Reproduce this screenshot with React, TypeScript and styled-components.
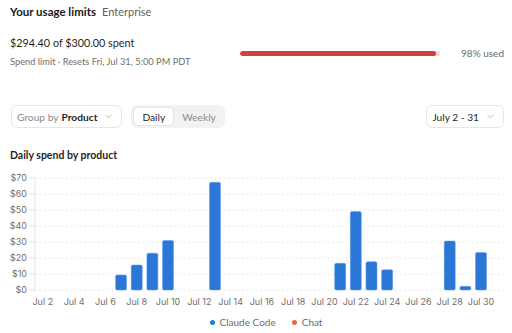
import React from 'react';
import styled, {createGlobalStyle} from 'styled-components';
import {ChevronDown} from 'lucide-react';

const GlobalStyle = createGlobalStyle`
    body {
        margin: 0;
        background: #ffffff;
        font-family: Lato, "Noto Sans", sans-serif;
        color: #1f1f1f;
    }
`;

const Page = styled.div`
    box-sizing: border-box;
    width: 512px;
    height: 333px;
    overflow: hidden;
    display: flex;
    flex-direction: column;
`;

const Header = styled.div`
    display: flex;
    align-items: baseline;
    gap: 6px;
    padding: 5px 10px 0;
`;

const Title = styled.h1`
    margin: 0;
    font-size: 11.5px;
    font-weight: 700;
    color: #1a1a1a;
`;

const Plan = styled.span`
    font-size: 11px;
    color: #5f5f5f;
`;

const Summary = styled.div`
    display: flex;
    align-items: center;
    justify-content: space-between;
    padding: 18px 8px 0 10px;
`;

const SummaryText = styled.div`
    display: flex;
    flex-direction: column;
    gap: 7px;
`;

const Spent = styled.div`
    font-size: 10.8px;
    color: #1f1f1f;
`;

const Resets = styled.div`
    font-size: 9.3px;
    color: #707070;
`;

const UsageRow = styled.div`
    display: flex;
    align-items: center;
    gap: 21px;
    margin-top: 3px;
`;

const Track = styled.div`
    width: 200px;
    height: 5px;
    border-radius: 3px;
    background: #f6d9d9;
    overflow: hidden;
`;

const Fill = styled.div`
    height: 100%;
    border-radius: 3px;
    background: #d23f40;
`;

const UsedLabel = styled.span`
    font-size: 10px;
    color: #6b6b6b;
`;

const Controls = styled.div`
    display: flex;
    align-items: center;
    gap: 9px;
    padding: 38px 8px 0 11px;
`;

const Select = styled.button`
    box-sizing: border-box;
    height: 23px;
    display: flex;
    align-items: center;
    gap: 3px;
    padding: 0 7px 0 5px;
    background: #fff;
    border: 1px solid #e6e6e6;
    border-radius: 6px;
    font-family: inherit;
    font-size: 10.2px;
    color: #1f1f1f;

    svg {
        color: #9a9a9a;
        margin-left: 3px;
    }
`;

const Muted = styled.span`
    color: #8a8a8a;
`;

const Strong = styled.span`
    font-weight: 700;
`;

const Segmented = styled.div`
    box-sizing: border-box;
    height: 23px;
    display: flex;
    align-items: center;
    gap: 1px;
    padding: 2px;
    background: #f2f2f2;
    border-radius: 6px;
`;

const Segment = styled.button<{$active?: boolean}>`
    box-sizing: border-box;
    height: 19px;
    padding: 0 ${({$active}) => ($active ? '8px' : '6px')};
    border: 1px solid ${({$active}) => ($active ? '#e4e4e4' : 'transparent')};
    border-radius: 5px;
    background: ${({$active}) => ($active ? '#ffffff' : 'transparent')};
    font-family: inherit;
    font-size: 10.2px;
    color: ${({$active}) => ($active ? '#1f1f1f' : '#8a8a8a')};
`;

const Spacer = styled.div`
    flex: 1;
`;

const ChartTitle = styled.h2`
    margin: 0;
    padding: 21px 10px 0;
    font-size: 10.5px;
    font-weight: 700;
    color: #1f1f1f;
`;

const ChartSvg = styled.svg`
    display: block;
    margin-top: 8px;
`;

const Legend = styled.div`
    display: flex;
    justify-content: center;
    gap: 16px;
    margin-top: 5px;
    padding-left: 20px;
`;

const LegendItem = styled.span<{$color: string}>`
    display: flex;
    align-items: center;
    gap: 5px;
    font-size: 10px;
    color: #6b6b6b;

    &::before {
        content: '';
        width: 5px;
        height: 5px;
        border-radius: 50%;
        background: ${({$color}) => $color};
    }
`;

// daily spend in dollars, Jul 2 .. Jul 31
const spend: Record<number, number> = {
    7: 9.4, 8: 15.6, 9: 23, 10: 31, 13: 67.3,
    21: 16.7, 22: 49, 23: 17.7, 24: 12.7,
    28: 30.6, 29: 2.3, 30: 23.5,
};

const X0 = 35;
const BAND = 15.65;
const ZERO = 121;
const PX_PER_DOLLAR = 1.6;

const SpendChart = () => {
    const days = Array.from({length: 30}, (_, i) => i + 2);
    const ticks = [0, 10, 20, 30, 40, 50, 60, 70];
    const centre = (day: number) => X0 + (day - 2 + 0.5) * BAND;

    return (
        <ChartSvg width={512} height={142} viewBox="0 0 512 142">
            {ticks.map(t => {
                const y = ZERO - t * PX_PER_DOLLAR;
                return (
                    <g key={t}>
                        <line x1={X0} x2={507} y1={y} y2={y} stroke="#e2e2e2" strokeWidth={1} strokeDasharray="1.5 3"/>
                        <line x1={29} x2={X0} y1={y} y2={y} stroke="#e2e2e2" strokeWidth={1}/>
                        <text x={27} y={y + 3.2} textAnchor="end" fontSize={9} fill="#707070" fontFamily="Inter, sans-serif">${t}</text>
                    </g>
                );
            })}
            <line x1={X0} x2={X0} y1={ZERO - 70 * PX_PER_DOLLAR} y2={ZERO} stroke="#e6e6e6" strokeWidth={1}/>
            {days.map(day => {
                const value = spend[day];
                if (!value) return null;
                const h = value * PX_PER_DOLLAR;
                return (
                    <rect key={day} x={centre(day) - 5.5} y={ZERO - h} width={11} height={h}
                          rx={1.5} fill="#2a77d8" stroke="#5c9ae6" strokeWidth={0.5}/>
                );
            })}
            {days.filter(d => d % 2 === 0).map(day => (
                <text key={day} x={centre(day)} y={136} textAnchor="middle" fontSize={9} fill="#707070" fontFamily="Inter, sans-serif">
                    Jul {day}
                </text>
            ))}
        </ChartSvg>
    );
};

export default function App() {
    return (
        <Page>
            <GlobalStyle/>
            <Header>
                <Title>Your usage limits</Title>
                <Plan>Enterprise</Plan>
            </Header>
            <Summary>
                <SummaryText>
                    <Spent>$294.40 of $300.00 spent</Spent>
                    <Resets>Spend limit · Resets Fri, Jul 31, 5:00 PM PDT</Resets>
                </SummaryText>
                <UsageRow>
                    <Track>
                        <Fill style={{width: `${(294.4 / 300) * 100}%`}}/>
                    </Track>
                    <UsedLabel>98% used</UsedLabel>
                </UsageRow>
            </Summary>
            <Controls>
                <Select>
                    <Muted>Group by</Muted>
                    <Strong>Product</Strong>
                    <ChevronDown size={11} strokeWidth={1.5}/>
                </Select>
                <Segmented>
                    <Segment $active>Daily</Segment>
                    <Segment>Weekly</Segment>
                </Segmented>
                <Spacer/>
                <Select>
                    <span>July 2 - 31</span>
                    <ChevronDown size={11} strokeWidth={1.5}/>
                </Select>
            </Controls>
            <ChartTitle>Daily spend by product</ChartTitle>
            <SpendChart/>
            <Legend>
                <LegendItem $color="#2a77d8">Claude Code</LegendItem>
                <LegendItem $color="#e8693a">Chat</LegendItem>
            </Legend>
        </Page>
    );
}
